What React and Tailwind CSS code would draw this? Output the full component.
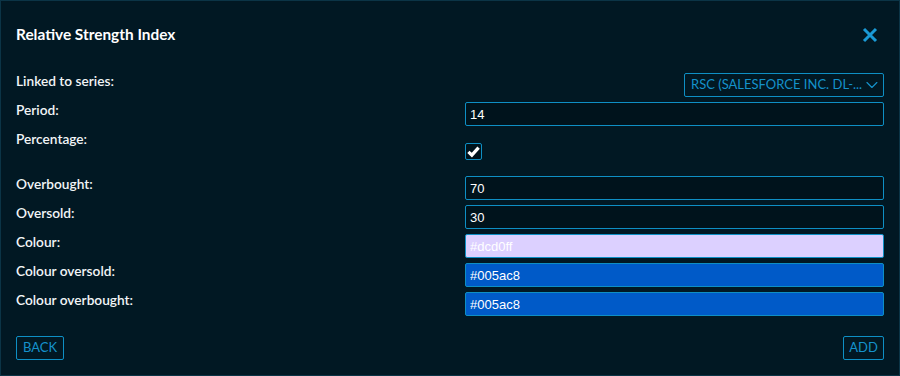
import React from "react";
import { ChevronDown } from "lucide-react";

const label = "text-[13.7px] leading-[14px] pt-[1px] font-semibold text-[#f2f5f7]";
const input =
  "block h-[24px] w-full border border-[#0e8fc4] rounded-[2px] px-[4px] text-[13px] text-white outline-none [font-family:'Liberation_Sans',Arial,sans-serif]";

const Row = ({ name, children, className = "" }) => (
  <div className={`grid grid-cols-[449px_1fr] ${className}`}>
    <div className={label}>{name}</div>
    <div>{children}</div>
  </div>
);

const App = () => {
  return (
    <div className="w-[900px] h-[376px] bg-[#011823] border border-[#0b3446] px-[15px] flex flex-col [font-family:Lato,'Noto_Sans',sans-serif]">
      {/* Header */}
      <div className="mt-[23px] h-[22px] flex items-center justify-between">
        <div className="text-[15.4px] font-bold text-white">Relative Strength Index</div>
        <svg width="16" height="16" viewBox="0 0 16 16" className="mr-[6px]">
          <path d="M2 2L14 14M14 2L2 14" stroke="#1a9ad6" strokeWidth="3" />
        </svg>
      </div>

      {/* Form */}
      <div className="mt-[27px] flex flex-col gap-[5px]">
        <Row name="Linked to series:">
          <div className="flex justify-end">
            <div className="w-[200px] h-[24px] border border-[#0e8fc4] rounded-[2px] flex items-center justify-between pl-[6px] pr-[4px] text-[13px] text-[#1592cb]">
              <span className="whitespace-nowrap">RSC (SALESFORCE INC. DL-...</span>
              <ChevronDown size={22} strokeWidth={1.4} className="-mr-[3px]" />
            </div>
          </div>
        </Row>
        <Row name="Period:">
          <input className={`${input} bg-[#00131c]`} defaultValue="14" />
        </Row>
        <Row name="Percentage:" className="h-[40px]">
          <div className="mt-[12px] w-[17px] h-[17px] border border-[#0e8fc4] rounded-[2px] flex items-center justify-center bg-[#00131c]">
            <svg width="13" height="13" viewBox="0 0 12 12">
              <path d="M1.3 6.3L4.5 9.4L10.7 2.4" stroke="white" strokeWidth="3" fill="none" />
            </svg>
          </div>
        </Row>
        <Row name="Overbought:">
          <input className={`${input} bg-[#00131c]`} defaultValue="70" />
        </Row>
        <Row name="Oversold:">
          <input className={`${input} bg-[#00131c]`} defaultValue="30" />
        </Row>
        <Row name="Colour:">
          <input className={`${input} bg-[#dcd0ff]`} defaultValue="#dcd0ff" />
        </Row>
        <Row name="Colour oversold:">
          <input className={`${input} bg-[#005ac8]`} defaultValue="#005ac8" />
        </Row>
        <Row name="Colour overbought:">
          <input className={`${input} bg-[#005ac8]`} defaultValue="#005ac8" />
        </Row>
      </div>

      {/* Footer */}
      <div className="mt-[20px] flex justify-between">
        <button className="h-[24px] w-[48px] border border-[#0e8fc4] rounded-[2px] text-[13px] text-[#1592cb]">BACK</button>
        <button className="h-[24px] w-[41px] border border-[#0e8fc4] rounded-[2px] text-[13px] text-[#1592cb]">ADD</button>
      </div>
    </div>
  );
};

export default App;
